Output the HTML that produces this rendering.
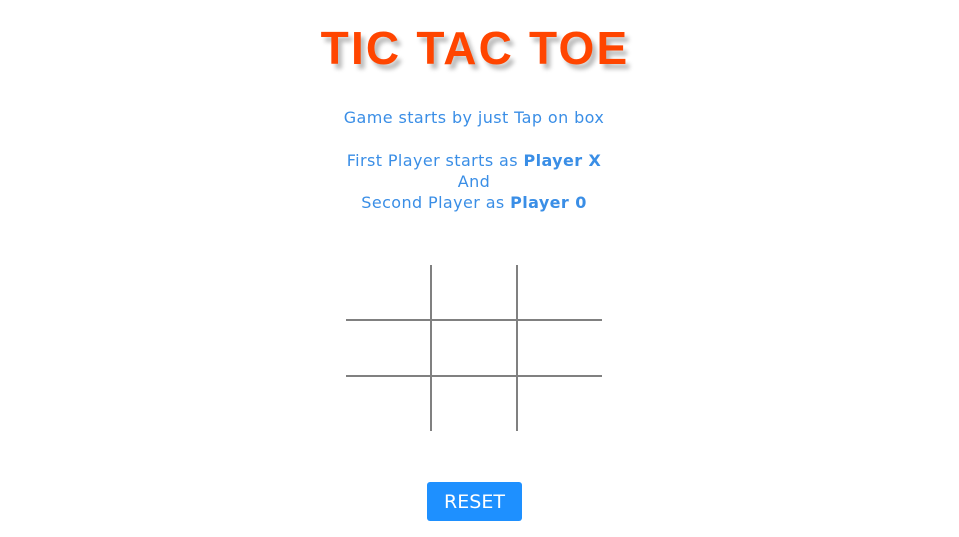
<!DOCTYPE html>
<html><head><style>
html,body{margin:0;padding:0;background:#fff;width:959px;height:537px;overflow:hidden}
.t{position:absolute;left:0;width:948px;text-align:center;font-family:"DejaVu Sans",Verdana,sans-serif;font-size:16px;letter-spacing:0.4px;color:#3a8ee6}
h1{position:absolute;left:0;top:21px;width:950px;margin:0;text-align:center;font-family:"Liberation Sans",sans-serif;font-weight:900;font-size:46px;letter-spacing:2.2px;color:#ff4500;text-shadow:4px 5px 4px #bbb}
.v{position:absolute;width:2px;background:#808080;top:265px;height:166px}
.h{position:absolute;height:2px;background:#808080;left:346px;width:256px}
.btn{position:absolute;left:427px;top:482px;width:95px;height:39px;background:#1e90ff;border-radius:3px;color:#fff;font-family:"DejaVu Sans",sans-serif;font-size:19px;line-height:40px;text-align:center}
</style></head><body>
<h1>TIC TAC TOE</h1>
<div class="t" style="top:108px">Game starts by just Tap on box</div>
<div class="t" style="top:150px;line-height:21px">First Player starts as <b>Player X</b><br>And<br>Second Player as <b>Player 0</b></div>
<div class="v" style="left:430px"></div>
<div class="v" style="left:516px"></div>
<div class="h" style="top:319px"></div>
<div class="h" style="top:375px"></div>
<div class="btn">RESET</div>
</body></html>
